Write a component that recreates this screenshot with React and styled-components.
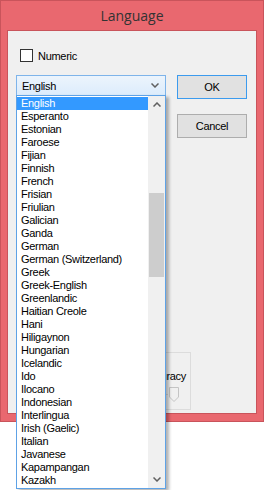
import React from "react";
import styled, { createGlobalStyle } from "styled-components";

const GlobalStyle = createGlobalStyle`
  html, body {
    margin: 0;
    padding: 0;
    background: #ffffff;
  }
  body {
    width: 264px;
    height: 490px;
    overflow: hidden;
    font-family: "Liberation Sans", Arial, sans-serif;
  }
`;

const Window = styled.div`
  width: 264px;
  height: 422px;
  box-sizing: border-box;
  background: #e9686f;
  border: 1px solid #c9545b;
  display: flex;
  flex-direction: column;
`;

const TitleBar = styled.div`
  height: 29px;
  display: flex;
  align-items: center;
  justify-content: center;
  font-family: "Open Sans", "Liberation Sans", sans-serif;
  font-size: 14px;
  color: #333333;
`;

const Client = styled.div`
  flex: 1;
  margin: 0 6px 7px 6px;
  border: 1px solid #c9545b;
  background: #f0f0f0;
  display: flex;
  flex-direction: column;
  padding: 18px 0 0 8px;
  font-size: 11px;
  letter-spacing: -0.3px;
  color: #000;
`;

const CheckRow = styled.label`
  display: flex;
  align-items: center;
  gap: 5px;
  height: 13px;
  padding-left: 4px;
`;

const CheckBox = styled.span`
  width: 13px;
  height: 13px;
  box-sizing: border-box;
  border: 1px solid #333333;
  background: #ffffff;
`;

const MainRow = styled.div`
  display: flex;
  align-items: flex-start;
  gap: 11px;
  margin-top: 13px;
`;

const ComboWrap = styled.div`
  position: relative;
  width: 150px;
  height: 21px;
`;

const Combo = styled.div`
  height: 21px;
  box-sizing: border-box;
  border: 1px solid #7eb4ea;
  background: linear-gradient(#ecf4fc, #dcecfc);
  display: flex;
  align-items: center;
  justify-content: space-between;
  padding: 0 6px 0 5px;
`;

const DropList = styled.div`
  position: absolute;
  top: 20px;
  left: 0;
  width: 150px;
  height: 394px;
  box-sizing: border-box;
  border: 1px solid #5ea2e6;
  background: #ffffff;
  display: flex;
  box-shadow: 3px 2px 3px rgba(0, 0, 0, 0.3);
  z-index: 2;
`;

const Items = styled.div`
  flex: 1;
  padding-top: 1px;
  overflow: hidden;
`;

const Item = styled.div`
  height: 13px;
  line-height: 13px;
  padding-left: 4px;
  white-space: nowrap;
  background: ${(p) => (p.$selected ? "#3399ff" : "transparent")};
  color: ${(p) => (p.$selected ? "#ffffff" : "#000000")};
`;

const ScrollBar = styled.div`
  width: 17px;
  background: #f0f0f0;
  display: flex;
  flex-direction: column;
`;

const ScrollButton = styled.div`
  height: 17px;
  display: flex;
  align-items: center;
  justify-content: center;
`;

const Track = styled.div`
  flex: 1;
  padding: 0 1px;
`;

const Thumb = styled.div`
  margin-top: 80px;
  height: 84px;
  background: #cdcdcd;
`;

const Buttons = styled.div`
  display: flex;
  flex-direction: column;
  gap: 15px;
`;

const Button = styled.div`
  width: 70px;
  height: 24px;
  box-sizing: border-box;
  border: 1px solid ${(p) => (p.$default ? "#3c9bee" : "#adadad")};
  background: #e1e1e1;
  display: flex;
  align-items: center;
  justify-content: center;
`;

const GroupBox = styled.div`
  margin-top: auto;
  margin-bottom: 3px;
  margin-left: 84px;
  width: 91px;
  height: 58px;
  box-sizing: border-box;
  border: 1px solid #dcdcdc;
  display: flex;
  flex-direction: column;
  padding-top: 17px;
`;

const GroupLabel = styled.div`
  align-self: flex-end;
  padding-right: 4px;
  line-height: 13px;
`;

const Slider = styled.div`
  display: flex;
  align-items: center;
  margin-top: 4px;
  padding-left: 60px;
  gap: 1px;
`;

const Channel = styled.span`
  width: 7px;
  height: 1px;
  background: #d8d8d8;
`;

const Chevron = ({ up }) => (
  <svg width="8" height="5" viewBox="0 0 8 5">
    <polyline
      points={up ? "0.5,4.5 4,1 7.5,4.5" : "0.5,0.5 4,4 7.5,0.5"}
      fill="none"
      stroke="#606060"
      strokeWidth="1.5"
    />
  </svg>
);

const languages = [
  "English",
  "Esperanto",
  "Estonian",
  "Faroese",
  "Fijian",
  "Finnish",
  "French",
  "Frisian",
  "Friulian",
  "Galician",
  "Ganda",
  "German",
  "German (Switzerland)",
  "Greek",
  "Greek-English",
  "Greenlandic",
  "Haitian Creole",
  "Hani",
  "Hiligaynon",
  "Hungarian",
  "Icelandic",
  "Ido",
  "Ilocano",
  "Indonesian",
  "Interlingua",
  "Irish (Gaelic)",
  "Italian",
  "Javanese",
  "Kapampangan",
  "Kazakh",
];

export default function App() {
  const selected = "English";
  return (
    <>
      <GlobalStyle />
      <Window>
        <TitleBar>Language</TitleBar>
        <Client>
          <CheckRow>
            <CheckBox />
            <span>Numeric</span>
          </CheckRow>
          <MainRow>
            <ComboWrap>
              <Combo>
                <span>{selected}</span>
                <Chevron />
              </Combo>
              <DropList>
                <Items>
                  {languages.map((lang) => (
                    <Item key={lang} $selected={lang === selected}>
                      {lang}
                    </Item>
                  ))}
                </Items>
                <ScrollBar>
                  <ScrollButton>
                    <Chevron up />
                  </ScrollButton>
                  <Track>
                    <Thumb />
                  </Track>
                  <ScrollButton>
                    <Chevron />
                  </ScrollButton>
                </ScrollBar>
              </DropList>
            </ComboWrap>
            <Buttons>
              <Button $default>OK</Button>
              <Button>Cancel</Button>
            </Buttons>
          </MainRow>
          <GroupBox>
            <GroupLabel>Accuracy</GroupLabel>
            <Slider>
              <Channel />
              <svg width="10" height="15" viewBox="0 0 10 15">
                <polygon
                  points="0.5,0.5 9.5,0.5 9.5,10 5,14.5 0.5,10"
                  fill="#f0f0f0"
                  stroke="#c4c4c4"
                />
              </svg>
            </Slider>
          </GroupBox>
        </Client>
      </Window>
    </>
  );
}
